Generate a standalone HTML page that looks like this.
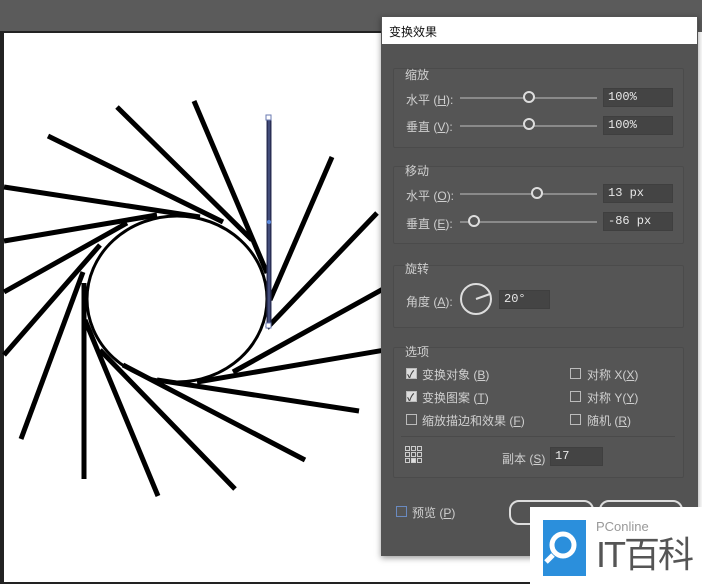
<!DOCTYPE html>
<html><head><meta charset="utf-8"><style>
*{margin:0;padding:0;box-sizing:border-box}
body{width:702px;height:584px;position:relative;overflow:hidden;background:#fff;font-family:"Liberation Sans","Noto Sans CJK SC",sans-serif}
.a{position:absolute}
.t{position:absolute;color:#cfcfcf;font-size:12px;white-space:nowrap}
.grp{position:absolute;border:1px solid #4b4b4b;background:#555;border-radius:2px}
.inp{position:absolute;background:#444;border:1px solid #3f3f3f;color:#e8e8e8;font-family:"Liberation Mono",monospace;font-size:12px;padding:1px 4px;height:19px}
.sl{position:absolute;height:2px;background:#8a8a8a}
.kn{position:absolute;width:12px;height:12px;border:2px solid #ddd;border-radius:50%;background:#555}
.cb{position:absolute;width:11px;height:11px;border:1px solid #bbb;background:#555}
.cb.on{background:#ddd}
.cb.on::after{content:"✓";position:absolute;left:0;top:-3px;font-size:10px;color:#444;font-weight:bold}
</style></head><body>
<div class="a" style="left:0;top:0;width:702px;height:32px;background:#5b5b5b"></div>
<div class="a" style="left:0;top:31px;width:4px;height:553px;background:#222"></div>
<div class="a" style="left:0;top:31px;width:382px;height:2px;background:#222"></div>
<div class="a" style="left:0;top:582px;width:702px;height:2px;background:#222"></div>
<svg class="a" style="left:0;top:0" width="400" height="584">
<g stroke="#000" stroke-width="5" fill="none">
<ellipse cx="177" cy="299" rx="90" ry="83" stroke-width="3"/>
<line x1="332" y1="157" x2="270" y2="300"/>
<line x1="377" y1="213" x2="267" y2="328"/>
<line x1="385" y1="288" x2="233" y2="372"/>
<line x1="385" y1="350" x2="197" y2="382"/>
<line x1="359" y1="411" x2="157" y2="380"/>
<line x1="305" y1="460" x2="123" y2="365"/>
<line x1="235" y1="489" x2="100" y2="350"/>
<line x1="158" y1="496" x2="85" y2="320"/>
<line x1="84" y1="479" x2="84" y2="283"/>
<line x1="21" y1="439" x2="83" y2="272"/>
<line x1="4" y1="355" x2="100" y2="245"/>
<line x1="4" y1="292" x2="127" y2="223"/>
<line x1="4" y1="241" x2="157" y2="215"/>
<line x1="4" y1="187" x2="200" y2="217"/>
<line x1="48" y1="136" x2="223" y2="222"/>
<line x1="117" y1="107" x2="252" y2="240"/>
<line x1="194" y1="101" x2="267" y2="273"/>
</g>
<line x1="269" y1="118" x2="269" y2="325" stroke="#2a2f55" stroke-width="5"/>
<line x1="269" y1="118" x2="269" y2="325" stroke="#5a6aa0" stroke-width="1"/>
<rect x="266" y="115" width="5" height="5" fill="#fff" stroke="#6a7ab0"/>
<rect x="266" y="323" width="5" height="5" fill="#fff" stroke="#6a7ab0"/>
<circle cx="269" cy="222" r="2" fill="#5b8be0"/>
</svg>
<div class="a" style="left:381px;top:16px;width:317px;height:540px;background:#535353;box-shadow:0 2px 6px rgba(0,0,0,.4)"></div>
<div class="a" style="left:382px;top:17px;width:315px;height:27px;background:#fff;color:#111;font-size:12px;padding:6px 7px">变换效果</div>

<div class="grp" style="left:393px;top:68px;width:291px;height:80px"></div>
<div class="t" style="left:405px;top:66px">缩放</div>
<div class="t" style="left:406px;top:91px">水平 (<u>H</u>):</div>
<div class="sl" style="left:460px;top:97px;width:137px"></div><div class="kn" style="left:523px;top:91px"></div>
<div class="inp" style="left:603px;top:88px;width:70px">100%</div>
<div class="t" style="left:406px;top:118px">垂直 (<u>V</u>):</div>
<div class="sl" style="left:460px;top:125px;width:137px"></div><div class="kn" style="left:523px;top:118px"></div>
<div class="inp" style="left:603px;top:116px;width:70px">100%</div>

<div class="grp" style="left:393px;top:166px;width:291px;height:78px"></div>
<div class="t" style="left:405px;top:162px">移动</div>
<div class="t" style="left:406px;top:187px">水平 (<u>O</u>):</div>
<div class="sl" style="left:460px;top:193px;width:137px"></div><div class="kn" style="left:531px;top:187px"></div>
<div class="inp" style="left:603px;top:184px;width:70px">13 px</div>
<div class="t" style="left:406px;top:215px">垂直 (<u>E</u>):</div>
<div class="sl" style="left:460px;top:221px;width:137px"></div><div class="kn" style="left:468px;top:215px"></div>
<div class="inp" style="left:603px;top:212px;width:70px">-86 px</div>

<div class="grp" style="left:393px;top:265px;width:291px;height:63px"></div>
<div class="t" style="left:405px;top:260px">旋转</div>
<div class="t" style="left:406px;top:293px">角度 (<u>A</u>):</div>
<svg class="a" style="left:459px;top:282px" width="34" height="34"><circle cx="17" cy="17" r="15" stroke="#ddd" stroke-width="2" fill="none"/><line x1="17" y1="17" x2="31" y2="12" stroke="#ddd" stroke-width="2"/></svg>
<div class="inp" style="left:499px;top:290px;width:51px">20°</div>

<div class="grp" style="left:393px;top:347px;width:291px;height:131px"></div>
<div class="t" style="left:405px;top:343px">选项</div>
<div class="cb on" style="left:406px;top:368px"></div><div class="t" style="left:422px;top:366px">变换对象 (<u>B</u>)</div>
<div class="cb on" style="left:406px;top:391px"></div><div class="t" style="left:422px;top:389px">变换图案 (<u>T</u>)</div>
<div class="cb" style="left:406px;top:414px"></div><div class="t" style="left:422px;top:412px">缩放描边和效果 (<u>F</u>)</div>
<div class="cb" style="left:570px;top:368px"></div><div class="t" style="left:587px;top:366px">对称 X(<u>X</u>)</div>
<div class="cb" style="left:570px;top:391px"></div><div class="t" style="left:587px;top:389px">对称 Y(<u>Y</u>)</div>
<div class="cb" style="left:570px;top:414px"></div><div class="t" style="left:587px;top:412px">随机 (<u>R</u>)</div>
<div class="a" style="left:401px;top:436px;width:274px;height:1px;background:#4a4a4a"></div>
<svg class="a" style="left:405px;top:446px" width="18" height="18" fill="none" stroke="#ccc" stroke-width="1">
<rect x="0.5" y="0.5" width="4" height="4"/><rect x="6.5" y="0.5" width="4" height="4"/><rect x="12.5" y="0.5" width="4" height="4"/>
<rect x="0.5" y="6.5" width="4" height="4"/><rect x="6.5" y="6.5" width="4" height="4"/><rect x="12.5" y="6.5" width="4" height="4"/>
<rect x="0.5" y="12.5" width="4" height="4"/><rect x="6.5" y="12.5" width="4" height="4" fill="#ddd"/><rect x="12.5" y="12.5" width="4" height="4"/></svg>
<div class="t" style="left:502px;top:450px">副本 (<u>S</u>)</div>
<div class="inp" style="left:550px;top:447px;width:53px">17</div>

<div class="cb" style="left:396px;top:506px;border-color:#6a8ac0"></div>
<div class="t" style="left:412px;top:504px">预览 (<u>P</u>)</div>
<div class="a" style="left:509px;top:500px;width:85px;height:25px;border:2px solid #ddd;border-radius:10px"></div>
<div class="a" style="left:599px;top:500px;width:84px;height:25px;border:2px solid #ddd;border-radius:10px"></div>

<div class="a" style="left:530px;top:507px;width:172px;height:77px;background:#fff"></div>
<div class="a" style="left:543px;top:520px;width:43px;height:56px;background:#2b8fdc"></div>
<svg class="a" style="left:543px;top:520px" width="45" height="56"><circle cx="20" cy="25" r="11" stroke="#fff" stroke-width="5" fill="none"/><line x1="10" y1="35" x2="3" y2="42" stroke="#fff" stroke-width="5"/></svg>
<div class="a" style="left:596px;top:519px;color:#999;font-size:13px;white-space:nowrap">PConline</div>
<div class="a" style="left:596px;top:535px;color:#555;font-size:36px;line-height:40px;white-space:nowrap;letter-spacing:-2px">IT百科</div>
</body></html>
